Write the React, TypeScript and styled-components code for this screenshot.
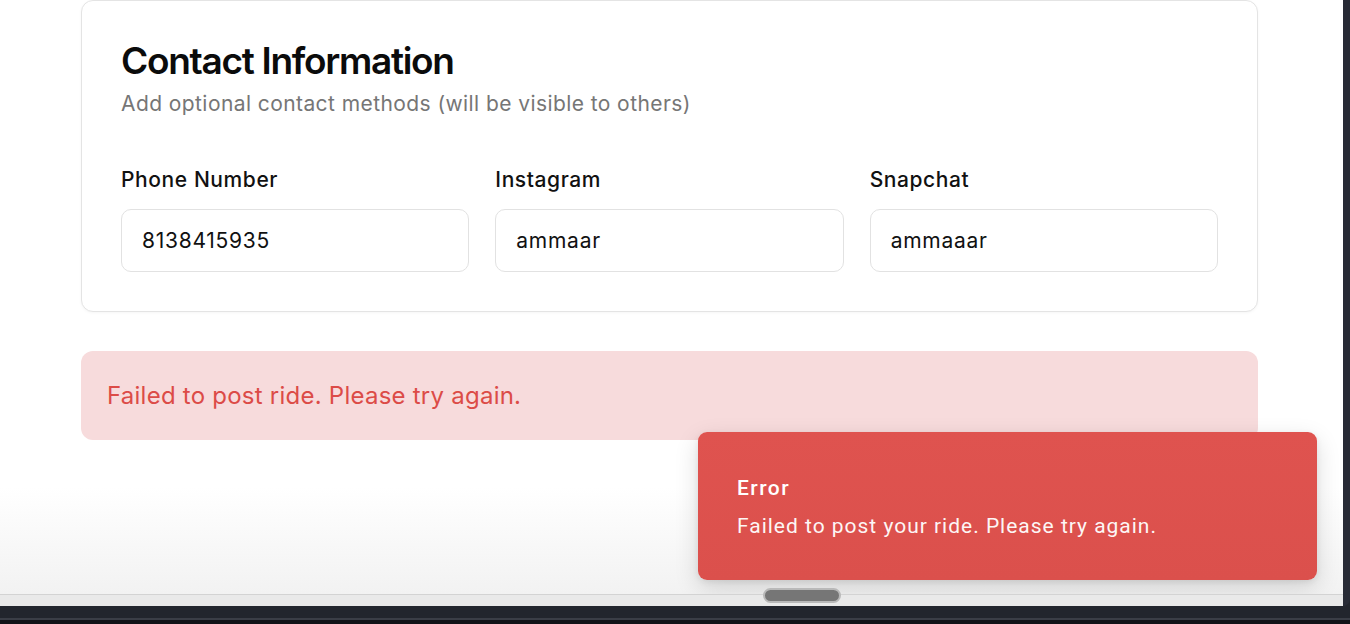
import React from 'react';
import styled, { createGlobalStyle } from 'styled-components';

const GlobalStyle = createGlobalStyle`
  html, body {
    margin: 0;
    padding: 0;
    background: #22252d;
  }
  body {
    font-family: Inter, "Noto Sans", sans-serif;
    -webkit-font-smoothing: antialiased;
  }
  * {
    box-sizing: border-box;
  }
`;

const Frame = styled.div`
  height: 624px;
  display: flex;
  flex-direction: column;
  background: #22252d;
  overflow: hidden;
`;

const WindowRow = styled.div`
  flex: 1;
  display: flex;
  min-height: 0;
`;

const WindowBody = styled.div`
  flex: 1;
  display: flex;
  flex-direction: column;
  min-width: 0;
`;

const Viewport = styled.main`
  position: relative;
  flex: 1;
  overflow: hidden;
  background: linear-gradient(180deg, #ffffff 0%, #ffffff 82%, #f2f2f2 100%);
`;

const RightEdge = styled.div`
  width: 7px;
  background: #282b36;
  border-bottom-right-radius: 10px;
`;

const ScrollTrack = styled.div`
  position: relative;
  z-index: 1;
  height: 12px;
  background: #e9e9e9;
  border-top: 1px solid #d3d3d3;
  padding-left: 763px;
`;

const ScrollThumb = styled.div`
  width: 78px;
  height: 15px;
  margin-top: -7px;
  border-radius: 8px;
  background: #767676;
  border: 2px solid #b9b9b9;
`;

const BottomBar = styled.div`
  height: 18px;
  background: #22252d;
  border-bottom: 4px solid #111217;
  box-shadow: inset 0 -2px 0 #3a3d46;
`;

const Content = styled.div`
  width: 1177px;
  margin-left: 81px;
  display: flex;
  flex-direction: column;
  gap: 39px;
`;

const Card = styled.section`
  background: #ffffff;
  border: 1px solid #e4e4e4;
  border-radius: 12px;
  padding: 38px 39px 39px;
  box-shadow: 0 1px 3px rgba(0, 0, 0, 0.04);
`;

const Title = styled.h2`
  margin: 0;
  font-size: 37px;
  line-height: 44px;
  font-weight: 600;
  letter-spacing: -0.035em;
  color: #0b0b0b;
`;

const Subtitle = styled.p`
  margin: 7px 0 0;
  font-size: 21px;
  line-height: 28px;
  letter-spacing: 0.02em;
  color: #767676;
`;

const FieldGrid = styled.div`
  display: grid;
  grid-template-columns: repeat(3, 1fr);
  gap: 26px;
  margin-top: 50px;
`;

const Field = styled.div`
  display: flex;
  flex-direction: column;
  gap: 17px;
`;

const Label = styled.label`
  font-size: 21px;
  line-height: 24px;
  font-weight: 500;
  letter-spacing: 0.028em;
  color: #111111;
`;

const Input = styled.input`
  height: 63px;
  width: 100%;
  padding: 0 20px;
  border: 1px solid #e2e2e2;
  border-radius: 10px;
  font-family: Inter, "Noto Sans", sans-serif;
  font-size: 21px;
  letter-spacing: 0.035em;
  color: #111111;
  background: #ffffff;
  outline: none;
`;

const ErrorBox = styled.div`
  height: 89px;
  display: flex;
  align-items: center;
  padding: 0 26px;
  border-radius: 12px;
  background: #f7dbdc;
  color: #dc4b47;
  font-size: 24px;
  letter-spacing: 0.01em;
`;

const Toast = styled.div`
  position: absolute;
  right: 26px;
  bottom: 14px;
  width: 619px;
  height: 148px;
  padding: 1px 39px 0;
  display: flex;
  flex-direction: column;
  justify-content: center;
  gap: 12px;
  border-radius: 9px;
  background: linear-gradient(180deg, #df534f 0%, #db504c 100%);
  color: #ffffff;
  font-family: Roboto, Inter, sans-serif;
  box-shadow: 0 8px 24px rgba(0, 0, 0, 0.14), 0 2px 6px rgba(0, 0, 0, 0.08);
`;

const ToastTitle = styled.div`
  font-size: 21px;
  line-height: 26px;
  font-weight: 500;
  letter-spacing: 0.07em;
`;

const ToastMessage = styled.div`
  font-size: 21px;
  line-height: 26px;
  font-weight: 400;
  letter-spacing: 0.047em;
  opacity: 0.95;
`;

const fields = [
  { label: 'Phone Number', value: '8138415935' },
  { label: 'Instagram', value: 'ammaar' },
  { label: 'Snapchat', value: 'ammaaar' },
];

const App: React.FC = () => {
  return (
    <>
      <GlobalStyle />
      <Frame>
        <WindowRow>
          <WindowBody>
            <Viewport>
              <Content>
                <Card>
                  <Title>Contact Information</Title>
                  <Subtitle>Add optional contact methods (will be visible to others)</Subtitle>
                  <FieldGrid>
                    {fields.map((f) => (
                      <Field key={f.label}>
                        <Label>{f.label}</Label>
                        <Input type="text" defaultValue={f.value} />
                      </Field>
                    ))}
                  </FieldGrid>
                </Card>
                <ErrorBox>Failed to post ride. Please try again.</ErrorBox>
              </Content>
              <Toast role="alert">
                <ToastTitle>Error</ToastTitle>
                <ToastMessage>Failed to post your ride. Please try again.</ToastMessage>
              </Toast>
            </Viewport>
            <ScrollTrack>
              <ScrollThumb />
            </ScrollTrack>
          </WindowBody>
          <RightEdge />
        </WindowRow>
        <BottomBar />
      </Frame>
    </>
  );
};

export default App;
